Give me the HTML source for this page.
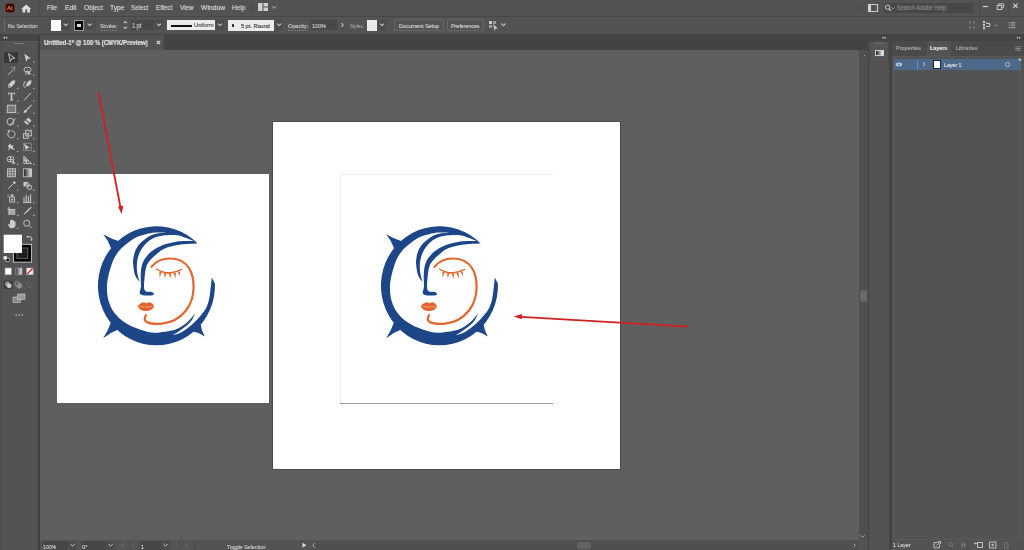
<!DOCTYPE html>
<html><head><meta charset="utf-8">
<style>
*{margin:0;padding:0;box-sizing:border-box}
html,body{width:1024px;height:550px;overflow:hidden;background:#535353;font-family:"Liberation Sans",sans-serif;color:#d4d4d4}
.a{position:absolute}
.t{position:absolute;white-space:nowrap;font-size:6.5px;line-height:8px;color:#d8d8d8;will-change:transform;-webkit-text-stroke:0.15px currentColor}
.sep{position:absolute;width:1px;background:#4a4a4a}
.chev{position:absolute;width:5px;height:3px}
</style></head><body>
<!-- menu bar -->
<div class="a" style="left:0;top:0;width:1024px;height:16px;background:#535353"></div>
<div class="a" style="left:0;top:15.5px;width:1024px;height:1px;background:#474747"></div>
<!-- Ai logo -->
<div class="a" style="left:5.5px;top:3.7px;width:8.4px;height:8px;background:#3a0806;border-radius:1.5px;box-shadow:0 0 0 0.5px #5a2018"></div>
<div class="t" style="left:7.2px;top:5.6px;font-size:5.4px;line-height:1;font-weight:700;color:#f07048">Ai</div>
<!-- home -->
<svg class="a" style="left:21px;top:3.5px" width="10.5" height="9" viewBox="0 0 10.5 9"><path d="M5.2 0.4 L10.2 4.9 L9 4.9 L9 8.6 L6.2 8.6 L6.2 5.6 L4.3 5.6 L4.3 8.6 L1.5 8.6 L1.5 4.9 L0.3 4.9 Z" fill="#dcdcdc"/></svg>
<div class="sep" style="left:38px;top:3px;height:10px"></div>
<div class="t" style="left:47.36px;top:5.11px;font-size:6.72px;line-height:1;font-weight:400;color:#d8d8d8;transform:scaleX(0.935);transform-origin:0 0">File</div>
<div class="t" style="left:64.56px;top:5.11px;font-size:6.72px;line-height:1;font-weight:400;color:#d8d8d8;transform:scaleX(0.990);transform-origin:0 0">Edit</div>
<div class="t" style="left:83.66px;top:5.11px;font-size:6.72px;line-height:1;font-weight:400;color:#d8d8d8;transform:scaleX(0.976);transform-origin:0 0">Object</div>
<div class="t" style="left:110.06px;top:5.11px;font-size:6.72px;line-height:1;font-weight:400;color:#d8d8d8;transform:scaleX(1.000);transform-origin:0 0">Type</div>
<div class="t" style="left:131.46px;top:5.11px;font-size:6.72px;line-height:1;font-weight:400;color:#d8d8d8;transform:scaleX(0.927);transform-origin:0 0">Select</div>
<div class="t" style="left:156.26px;top:5.11px;font-size:6.72px;line-height:1;font-weight:400;color:#d8d8d8;transform:scaleX(0.958);transform-origin:0 0">Effect</div>
<div class="t" style="left:180.16px;top:5.11px;font-size:6.72px;line-height:1;font-weight:400;color:#d8d8d8;transform:scaleX(0.943);transform-origin:0 0">View</div>
<div class="t" style="left:200.96px;top:5.11px;font-size:6.72px;line-height:1;font-weight:400;color:#d8d8d8;transform:scaleX(1.007);transform-origin:0 0">Window</div>
<div class="t" style="left:232.16px;top:5.11px;font-size:6.72px;line-height:1;font-weight:400;color:#d8d8d8;transform:scaleX(0.965);transform-origin:0 0">Help</div>
<div class="sep" style="left:251px;top:3px;height:10px"></div>
<svg class="a" style="left:258px;top:3px" width="10" height="8" viewBox="0 0 10 8"><rect x="0" y="0" width="4.5" height="8" fill="#d0d0d0"/><rect x="5.5" y="0" width="4.5" height="3.5" fill="#d0d0d0"/><rect x="5.5" y="4.5" width="4.5" height="3.5" fill="#d0d0d0"/></svg>

<!-- search / window controls -->
<div class="sep" style="left:861px;top:3px;height:10px"></div>
<svg class="a" style="left:868px;top:4px" width="10" height="8" viewBox="0 0 10 8"><rect x="0.5" y="0.5" width="9" height="7" fill="none" stroke="#cfcfcf" stroke-width="1"/><rect x="1" y="1" width="2" height="6" fill="#cfcfcf"/></svg>
<div class="a" style="left:884px;top:3px;width:89px;height:10px;background:#474747;border-radius:1px"></div>
<svg class="a" style="left:884px;top:3px" width="12" height="10" viewBox="0 0 12 10"><circle cx="3.6" cy="4.2" r="2.2" fill="none" stroke="#d0d0d0" stroke-width="1"/><path d="M5.2 5.8 L7 7.8" stroke="#d0d0d0" stroke-width="1.2"/><path d="M7.6 4.4 L9 5.8 L10.4 4.4" fill="none" stroke="#c0c0c0" stroke-width="0.9"/></svg>
<div class="t" style="left:896.58px;top:5.26px;font-size:6.31px;line-height:1;font-weight:400;color:#8a8a8a;transform:scaleX(0.910);transform-origin:0 0">Search Adobe Help</div>
<div class="sep" style="left:978.6px;top:0;height:15px;background:#4b4b4b"></div>
<div class="sep" style="left:993px;top:0;height:15px;background:#4b4b4b"></div>
<div class="sep" style="left:1008.2px;top:0;height:15px;background:#4b4b4b"></div>
<svg class="a" style="left:0;top:0" width="1024" height="16" viewBox="0 0 1024 16">
<path d="M272.0 6.2 L274.1 8.3 L276.2 6.2" fill="none" stroke="#c8c8c8" stroke-width="0.9"/>
<rect x="982.8" y="5.9" width="5.4" height="1.2" fill="#d0d0d0"/>
<g fill="none" stroke="#d0d0d0" stroke-width="0.9"><rect x="997.2" y="5.5" width="4.5" height="4"/><path d="M998.7 5.5 V3.8 H1003.4 V7.8 H1001.7"/></g>
<path d="M1013.3 3.6 L1017.6 7.9 M1017.6 3.6 L1013.3 7.9" stroke="#d8d8d8" stroke-width="1.1"/>
</svg>


<!-- control bar -->
<div class="a" style="left:0;top:16.5px;width:1024px;height:17.5px;background:#535353"></div>
<div class="a" style="left:0;top:34px;width:1024px;height:1px;background:#424242"></div>

<!-- control bar content -->
<div class="a" style="left:3.5px;top:19px;width:1px;height:12px;background:#6a6a6a"></div>
<div class="t" style="left:7.71px;top:24.21px;font-size:5.90px;line-height:1;font-weight:400;color:#c8c8c8;transform:scaleX(0.895);transform-origin:0 0">No Selection</div>
<div class="a" style="left:50.5px;top:20px;width:10.5px;height:10.5px;background:#fff"></div>
<div class="a" style="left:62px;top:20.3px;width:7.5px;height:9.5px;background:#4c4c4c"></div>
<div class="a" style="left:73.8px;top:20px;width:10.6px;height:10.8px;background:#000;border:1px solid #9a9a9a"></div>
<div class="a" style="left:77.3px;top:23.5px;width:3.6px;height:3.6px;background:#d8d8d8"></div>
<div class="a" style="left:86px;top:20.3px;width:7.5px;height:9.5px;background:#4c4c4c"></div>
<div class="a" style="left:95px;top:19px;width:1px;height:12px;background:#4a4a4a"></div>
<div class="t" style="left:100.30px;top:23.09px;font-size:6.04px;line-height:1;font-weight:400;color:#cccccc;transform:scaleX(0.910);transform-origin:0 0">Stroke:</div>
<div class="a" style="left:100.6px;top:30px;width:16.8px;height:0;border-top:0.6px dotted #8a8a8a"></div>
<div class="a" style="left:288px;top:30px;width:19.6px;height:0;border-top:0.6px dotted #8a8a8a"></div>
<div class="a" style="left:131.3px;top:20.3px;width:23px;height:9.7px;background:#474747"></div>
<div class="t" style="left:132.48px;top:22.66px;font-size:6.31px;line-height:1;font-weight:400;color:#cccccc;transform:scaleX(0.890);transform-origin:0 0">1 pt</div>
<div class="a" style="left:155px;top:20.3px;width:8px;height:9.7px;background:#4c4c4c"></div>
<div class="a" style="left:167.3px;top:19.8px;width:47.7px;height:10.7px;background:#ececec"></div>
<div class="a" style="left:171px;top:25px;width:21px;height:1.6px;background:#111"></div>
<div class="t" style="left:193.71px;top:23.21px;font-size:5.90px;line-height:1;font-weight:400;color:#4a4a4a;transform:scaleX(0.951);transform-origin:0 0">Uniform</div>
<div class="a" style="left:216.3px;top:20.3px;width:7.5px;height:9.7px;background:#4c4c4c"></div>
<div class="a" style="left:228px;top:20.2px;width:46.3px;height:10.4px;background:#ececec"></div>
<div class="a" style="left:231.8px;top:24px;width:2.6px;height:2.6px;border-radius:50%;background:#111"></div>
<div class="t" style="left:240.50px;top:23.09px;font-size:6.04px;line-height:1;font-weight:400;color:#333333;transform:scaleX(0.924);transform-origin:0 0">5 pt. Round</div>
<div class="a" style="left:275.5px;top:20.3px;width:7.5px;height:9.7px;background:#4c4c4c"></div>
<div class="t" style="left:287.70px;top:23.09px;font-size:6.04px;line-height:1;font-weight:400;color:#cccccc;transform:scaleX(0.913);transform-origin:0 0">Opacity:</div>
<div class="a" style="left:311.4px;top:20.3px;width:25.7px;height:9.7px;background:#474747"></div>
<div class="t" style="left:312.20px;top:23.09px;font-size:6.04px;line-height:1;font-weight:400;color:#cccccc;transform:scaleX(0.913);transform-origin:0 0">100%</div>
<div class="t" style="left:350.10px;top:23.09px;font-size:6.04px;line-height:1;font-weight:400;color:#a0a0a0;transform:scaleX(0.762);transform-origin:0 0">Styles:</div>
<div class="a" style="left:367px;top:20.2px;width:10px;height:10.4px;background:#eaeaea"></div>
<div class="a" style="left:378px;top:20.3px;width:8px;height:9.7px;background:#4c4c4c"></div>
<div class="a" style="left:394px;top:19.4px;width:50px;height:11.8px;border:1px solid #666;border-radius:1px"></div>
<div class="t" style="left:398.50px;top:23.09px;font-size:6.04px;line-height:1;font-weight:400;color:#d4d4d4;transform:scaleX(0.893);transform-origin:0 0">Document Setup</div>
<div class="a" style="left:447px;top:19.4px;width:37px;height:11.8px;border:1px solid #666;border-radius:1px"></div>
<div class="t" style="left:450.70px;top:23.09px;font-size:6.04px;line-height:1;font-weight:400;color:#d4d4d4;transform:scaleX(0.876);transform-origin:0 0">Preferences</div>
<svg class="a" style="left:0;top:16px" width="1024" height="18" viewBox="0 16 1024 18">
<g fill="none" stroke="#c8c8c8" stroke-width="1.05" stroke-linejoin="round">
<path d="M63.7 23.6 L65.8 25.7 L67.9 23.6"/>
<path d="M87.7 23.6 L89.8 25.7 L91.9 23.6"/>
<path d="M123.8 23 L125.4 21.6 L127 23 M123.8 27 L125.4 28.4 L127 27"/>
<path d="M156.9 23.6 L159.0 25.7 L161.1 23.6"/>
<path d="M217.9 23.6 L220.0 25.7 L222.1 23.6"/>
<path d="M277.1 23.6 L279.2 25.7 L281.3 23.6"/>
<path d="M341.6 23.2 L343.2 25 L341.6 26.8"/>
<path d="M379.9 23.6 L382.0 25.7 L384.1 23.6"/>
<path d="M501.2 23.6 L503.3 25.7 L505.4 23.6"/>
<path d="M994.5 24.6 L996.3 26 L998.1 24.6" stroke="#7a7a7a"/>
</g>
<g fill="#c8c8c8">
<rect x="489" y="21" width="3" height="3"/><rect x="489" y="25" width="3" height="3" fill="#9a9a9a"/><rect x="493" y="21" width="3" height="3" fill="#9a9a9a"/>
<path d="M493 24 L498 28.5 L495.6 28.6 L494.6 31 Z"/>
<g fill="#7c7c7c"><rect x="969" y="21.5" width="2" height="2"/><rect x="973" y="21.5" width="2" height="2"/><rect x="969" y="26.5" width="2" height="2"/><rect x="973" y="26.5" width="2" height="2"/></g>
<rect x="983" y="21" width="2" height="2.2"/><rect x="983" y="24" width="2" height="2.2"/><rect x="983" y="27" width="2" height="2.2"/>
<path d="M986 22.8 h2.4 a2.1 2.1 0 0 1 0 4.2 h-2.4 v-1.1 h2.4 a1 1 0 0 0 0 -2 h-2.4 Z"/>
<g fill="#a8a8a8"><rect x="1008.8" y="22.2" width="1.2" height="1.2"/><rect x="1008.8" y="24.6" width="1.2" height="1.2"/><rect x="1008.8" y="27" width="1.2" height="1.2"/>
<rect x="1010.8" y="22.2" width="4.4" height="1.1"/><rect x="1010.8" y="24.6" width="4.4" height="1.1"/><rect x="1010.8" y="27" width="4.4" height="1.1"/></g>
</g>
</svg>
<!-- tab bar + canvas -->
<div class="a" style="left:38px;top:34px;width:830px;height:16px;background:#434343"></div>
<div class="a" style="left:40px;top:35px;width:124px;height:15px;background:#535353"></div>
<div class="t" style="left:44.08px;top:39.66px;font-size:6.31px;line-height:1;font-weight:700;color:#e6e6e6;transform:scaleX(0.951);transform-origin:0 0">Untitled-1* @ 100 % (CMYK/Preview)</div>
<svg class="a" style="left:156px;top:40px" width="5" height="5" viewBox="0 0 5 5"><path d="M0.8 0.8 L4.2 4.2 M4.2 0.8 L0.8 4.2" stroke="#e0e0e0" stroke-width="1.1"/></svg>
<div class="a" style="left:40px;top:50px;width:818.5px;height:490px;background:#5f5f5f"></div>

<!-- toolbar -->
<div class="a" style="left:0;top:34px;width:38px;height:516px;background:#535353"></div>
<div class="a" style="left:0;top:34px;width:38px;height:7px;background:#444"></div>
<div class="a" style="left:38px;top:34px;width:2px;height:516px;background:#3f3f3f"></div>

<!-- toolbar content -->
<div class="a" style="left:1px;top:41px;width:37px;height:509px;border-left:1px solid #4c4c4c;border-top:1px solid #5a5a5a"></div>
<div class="a" style="left:14.2px;top:43px;width:9.8px;height:0.9px;background:#7a7a7a"></div>
<div class="a" style="left:4.1px;top:52px;width:14.3px;height:10.8px;background:#383838"></div>
<svg class="a" style="left:0;top:34px" width="38" height="290" viewBox="0 34 38 290">
<path d="M5 36.3 L3 37.7 L5 39.1 Z M7.3 36.3 L5.3 37.7 L7.3 39.1 Z" fill="#c0c0c0"/>
<g transform="translate(11.5 57.5)"><path fill="none" stroke="#cdcdcd" stroke-width="0.9" d="M-2.8 -3.8 L3.3 0.8 L0.2 1.2 L-1.2 4 Z"/></g>
<g transform="translate(27.5 57.5)"><path fill="#cdcdcd" d="M-3.2 -3.8 L3.5 1 L0.3 1.3 L-1.3 4.2 Z"/></g>
<g transform="translate(11.5 70.8)"><path fill="none" stroke="#cdcdcd" stroke-width="0.9" stroke-width="1.2" d="M-3.5 4 L2 -1.5"/><path fill="none" stroke="#cdcdcd" stroke-width="0.9" stroke-width="0.7" d="M2.5 -4 V-2.5 M3.8 -2.7 L2.6 -2 M-0.5 -3.5 L0.6 -2.6 M3.5 0.5 L2.6 -0.3"/></g>
<g transform="translate(27.5 70.8)"><ellipse cx="0" cy="-1.2" rx="3.6" ry="2.4" fill="none" stroke="#cdcdcd" stroke-width="0.9"/><path fill="#cdcdcd" d="M-0.5 -1 L3.8 3.5 L1.2 3.4 L0.5 4.5 Z"/><path fill="none" stroke="#cdcdcd" stroke-width="0.9" d="M-1.5 1 Q-2.5 3 -1 4"/></g>
<g transform="translate(11.5 84)"><path fill="#cdcdcd" d="M3.8 -3.8 L0.5 -3.2 L-3 0.5 L-3.4 3.8 L-0.2 3.2 L3.2 -0.5 Z"/><path fill="#535353" d="M-1.8 1.5 L-0.8 2.2 L-2.8 3.3 Z"/></g>
<g transform="translate(27.5 84)"><path fill="#cdcdcd" d="M4 -3.8 L1.4 -3.2 L-1 -0.6 L-1.4 2.4 L1.4 1.9 L3.6 -0.8 Z"/><path fill="none" stroke="#cdcdcd" stroke-width="0.9" d="M-1.4 2.4 Q-3.6 4.4 -3.8 1.5 Q-4 -1 -2 -3"/></g>
<g transform="translate(11.5 96.6)"><path fill="#cdcdcd" d="M-3.5 -3.8 H3.5 V-1.8 H2.8 L2.5 -3 H0.8 V3 L1.8 3.3 V4 H-1.8 V3.3 L-0.8 3 V-3 H-2.5 L-2.8 -1.8 H-3.5 Z"/></g>
<g transform="translate(27.5 96.6)"><path fill="none" stroke="#cdcdcd" stroke-width="0.9" stroke-width="1.1" d="M-3.5 3.8 L3.5 -3.8"/></g>
<g transform="translate(11.5 108.8)"><rect x="-4.2" y="-3.6" width="8.4" height="7.4" fill="#7a7a7a" stroke="#c8c8c8" stroke-width="0.9"/></g>
<g transform="translate(27.5 108.8)"><path fill="#cdcdcd" d="M4 -4.2 L4.5 -3.7 L0 1.3 L-1 0.3 Z"/><path fill="#cdcdcd" d="M-1.4 0.8 L-0.2 2 Q-0.8 4.2 -4 4.2 Q-3.6 1.2 -1.4 0.8 Z"/></g>
<g transform="translate(11.5 121.6)"><circle cx="-1" cy="0" r="3.4" fill="none" stroke="#cdcdcd" stroke-width="0.9"/><path fill="none" stroke="#cdcdcd" stroke-width="0.9" stroke-width="1.1" d="M-1.5 4 L4 -3"/></g>
<g transform="translate(27.5 121.6)"><path fill="#cdcdcd" d="M0.8 -4 L4 -0.8 L-0.2 3.4 L-3.4 0.2 Z"/><path fill="#535353" d="M-1.2 -1.9 L1.9 1.2 L1.2 1.9 L-1.9 -1.2 Z"/></g>
<g transform="translate(11.5 134.3)"><path fill="none" stroke="#cdcdcd" stroke-width="0.9" d="M-2.8 -2.4 A3.6 3.6 0 1 0 0 -3.6"/><path fill="#cdcdcd" d="M-4 -4 L-1 -4 L-2.5 -1.5 Z"/></g>
<g transform="translate(27.5 134.3)"><rect x="-4" y="-0.6" width="4.6" height="4.6" fill="none" stroke="#cdcdcd" stroke-width="0.9"/><rect x="-1.8" y="-4" width="5.6" height="5.6" fill="none" stroke="#cdcdcd" stroke-width="0.9"/><path fill="none" stroke="#cdcdcd" stroke-width="0.9" d="M-0.6 0.4 L2.8 -3"/></g>
<g transform="translate(11.5 147)"><path fill="#cdcdcd" d="M-3.5 3.8 L-2.5 0.5 L-3.6 -1 L-1.5 -3.5 L0 -1.2 L2 -2 L1.2 0.8 L3.8 2.5 L0.5 2.5 L-1 1 Z"/></g>
<g transform="translate(27.5 147)"><rect x="-3.8" y="-3.6" width="7.6" height="7.2" fill="none" stroke="#bdbdbd" stroke-width="0.8" stroke-dasharray="1.2 0.8"/><path fill="#cdcdcd" d="M-3.6 -3.4 L2.6 1 L-0.3 1.2 L-1.5 3.6 Z"/></g>
<g transform="translate(11.5 160)"><ellipse cx="-1" cy="-0.8" rx="3.5" ry="2.8" fill="none" stroke="#cdcdcd" stroke-width="0.9"/><path fill="none" stroke="#cdcdcd" stroke-width="0.9" stroke-width="0.6" d="M-3 -0.5 H1.5 M-1 -3.4 V2"/><path fill="#cdcdcd" d="M0.8 0.2 L4.2 3.6 L2.2 3.6 L1.2 4.6 Z"/></g>
<g transform="translate(27.5 160)"><path fill="none" stroke="#cdcdcd" stroke-width="0.9" d="M-3.6 -4 V3.6 H4 Z M-3.6 0 L1.5 1.2 M-3.6 -1.8 L-0.5 3.6 M-1.5 -2.2 L-0.6 3.6"/></g>
<g transform="translate(11.5 172.8)"><rect x="-4" y="-4" width="8" height="8" fill="#6a6a6a" stroke="#c8c8c8" stroke-width="0.9"/><path fill="none" stroke="#d8d8d8" stroke-width="0.6" d="M-4 -1.2 Q0 -2.4 4 -1 M-4 1.4 Q0 0.4 4 1.6 M-1.3 -4 Q-2.4 0 -1 4 M1.4 -4 Q0.4 0 1.6 4"/></g>
<g transform="translate(27.5 172.8)"><defs><linearGradient id="tg"><stop offset="0" stop-color="#1a1a1a"/><stop offset="1" stop-color="#e8e8e8"/></linearGradient></defs><rect x="-4" y="-4" width="8" height="8" fill="url(#tg)" stroke="#c8c8c8" stroke-width="0.8"/></g>
<g transform="translate(11.5 185.5)"><path fill="none" stroke="#cdcdcd" stroke-width="0.9" stroke-width="1.6" d="M-3.2 3.2 L2.2 -2.2"/><path fill="#cdcdcd" d="M1.2 -3.2 L2.8 -4.4 L4.4 -2.8 L3.2 -1.2 Z"/></g>
<g transform="translate(27.5 185.5)"><rect x="-4" y="-3.6" width="4.5" height="4.5" fill="#cdcdcd"/><rect x="-1.6" y="-2.2" width="4" height="4" fill="#909090"/><circle cx="2" cy="1.8" r="2.3" fill="none" stroke="#cdcdcd" stroke-width="0.9"/></g>
<g transform="translate(11.5 198.3)"><rect x="-1.8" y="-1.2" width="4.8" height="5" fill="none" stroke="#cdcdcd" stroke-width="0.9"/><rect x="-0.8" y="-3.8" width="2.8" height="2" fill="#cdcdcd"/><circle cx="0.6" cy="1.4" r="1" fill="#cdcdcd"/><path fill="none" stroke="#cdcdcd" stroke-width="0.9" stroke-width="0.6" d="M-4 -3.5 H-2.8 M-4 -2 H-2.8"/></g>
<g transform="translate(27.5 198.3)"><path fill="#cdcdcd" d="M-4 -1 H-3 V4 H-4 Z M-1.8 -3.5 H-0.8 V4 H-1.8 Z M0.4 -2 H1.4 V4 H0.4 Z M2.6 -4 H3.6 V4 H2.6 Z"/><path fill="none" stroke="#cdcdcd" stroke-width="0.9" stroke-width="0.6" d="M-4.4 4.2 H4"/></g>
<g transform="translate(11.5 211)"><rect x="-2.6" y="-1.6" width="6.4" height="5.6" fill="#cdcdcd" fill-opacity="0.7"/><path fill="none" stroke="#cdcdcd" stroke-width="0.9" stroke-width="0.7" d="M-4.2 -1.6 H3.8 M-2.6 -4.2 V4"/></g>
<g transform="translate(27.5 211)"><path fill="#cdcdcd" d="M4 -4 L1.5 -1 L-2.5 3 L-3.8 3.8 L-3.2 2.2 L1.5 -2.5 Z"/><path fill="none" stroke="#cdcdcd" stroke-width="0.9" d="M4 -4 L-0.6 0.8"/></g>
<g transform="translate(11.5 224)"><path fill="#cdcdcd" d="M-3.6 0.2 L-2.9 -0.3 L-1.5 1 V-3.4 L-0.7 -3.8 L-0.2 -3.4 V-0.6 V-4.2 L0.6 -4.4 L1.2 -4 V-0.6 V-3.4 L2 -3.8 L2.6 -3.4 V-0.4 V-2.4 L3.4 -2.6 L4 -2.2 V1.8 Q3.6 4.2 1 4.2 H-0.6 Q-1.8 4 -2.6 2.4 Z"/></g>
<g transform="translate(27.5 224)"><circle cx="-0.8" cy="-0.8" r="3" fill="none" stroke="#cdcdcd" stroke-width="0.9"/><path fill="none" stroke="#cdcdcd" stroke-width="0.9" stroke-width="1.2" d="M1.4 1.4 L4 4"/></g>
<path d="M34.4 60.7 V62.5 H32.6 Z" fill="#bdbdbd"/>
<path d="M34.4 74.0 V75.8 H32.6 Z" fill="#bdbdbd"/>
<path d="M18.4 87.2 V89 H16.6 Z" fill="#bdbdbd"/>
<path d="M34.4 87.2 V89 H32.6 Z" fill="#bdbdbd"/>
<path d="M18.4 99.8 V101.6 H16.6 Z" fill="#bdbdbd"/>
<path d="M34.4 99.8 V101.6 H32.6 Z" fill="#bdbdbd"/>
<path d="M18.4 112.0 V113.8 H16.6 Z" fill="#bdbdbd"/>
<path d="M34.4 112.0 V113.8 H32.6 Z" fill="#bdbdbd"/>
<path d="M18.4 124.8 V126.6 H16.6 Z" fill="#bdbdbd"/>
<path d="M34.4 124.8 V126.6 H32.6 Z" fill="#bdbdbd"/>
<path d="M18.4 137.5 V139.3 H16.6 Z" fill="#bdbdbd"/>
<path d="M34.4 137.5 V139.3 H32.6 Z" fill="#bdbdbd"/>
<path d="M18.4 150.2 V152 H16.6 Z" fill="#bdbdbd"/>
<path d="M34.4 150.2 V152 H32.6 Z" fill="#bdbdbd"/>
<path d="M18.4 163.2 V165 H16.6 Z" fill="#bdbdbd"/>
<path d="M34.4 163.2 V165 H32.6 Z" fill="#bdbdbd"/>
<path d="M18.4 188.7 V190.5 H16.6 Z" fill="#bdbdbd"/>
<path d="M34.4 188.7 V190.5 H32.6 Z" fill="#bdbdbd"/>
<path d="M18.4 201.5 V203.3 H16.6 Z" fill="#bdbdbd"/>
<path d="M34.4 201.5 V203.3 H32.6 Z" fill="#bdbdbd"/>
<path d="M18.4 214.2 V216 H16.6 Z" fill="#bdbdbd"/>
<path d="M34.4 214.2 V216 H32.6 Z" fill="#bdbdbd"/>
<path d="M18.4 227.2 V229 H16.6 Z" fill="#bdbdbd"/>
<rect x="13.4" y="244.3" width="18.2" height="17.8" fill="#000" stroke="#cfcfcf" stroke-width="0.9"/>
<rect x="17" y="248" width="10.8" height="10.4" fill="#1e1e1e" stroke="#6a6a6a" stroke-width="0.9"/>
<rect x="3.7" y="234.7" width="18.3" height="18.3" fill="#fff"/>
<path d="M27.5 236.8 H30.2 Q31.6 236.8 31.6 238.2 V240" fill="none" stroke="#cdcdcd" stroke-width="0.9"/>
<path d="M26.4 236.8 L28 235.4 V238.2 Z M30.2 239.6 H33 L31.6 241 Z" fill="#cdcdcd"/>
<rect x="6" y="258.2" width="3.2" height="3.2" fill="#000" stroke="#cfcfcf" stroke-width="0.7"/>
<rect x="3.6" y="256.2" width="3.2" height="3.2" fill="#fff"/>
<rect x="5" y="268" width="6.4" height="6.8" fill="#fff" stroke="#999" stroke-width="0.6"/>
<defs><linearGradient id="tg2"><stop offset="0" stop-color="#333"/><stop offset="1" stop-color="#eee"/></linearGradient></defs>
<rect x="15.4" y="268" width="6.6" height="6.8" fill="url(#tg2)" stroke="#999" stroke-width="0.6"/>
<rect x="26.4" y="268" width="6.7" height="6.8" fill="#fff" stroke="#999" stroke-width="0.6"/>
<path d="M26.9 274.3 L32.6 268.5" stroke="#e0201f" stroke-width="1.4"/>
<rect x="4" y="280.6" width="8.6" height="8.4" fill="#3c3c3c"/>
<circle cx="7.4" cy="284" r="2.4" fill="#9a9a9a"/><circle cx="9.2" cy="285.8" r="2.4" fill="#cfcfcf"/>
<circle cx="17.4" cy="284" r="2.4" fill="none" stroke="#a0a0a0" stroke-width="0.8"/><circle cx="19.4" cy="285.8" r="2.4" fill="#8a8a8a" stroke="#a0a0a0" stroke-width="0.6"/>
<circle cx="29.6" cy="284.8" r="2.6" fill="none" stroke="#6c6c6c" stroke-width="0.8"/>
<rect x="13" y="297" width="7.5" height="5.4" fill="#8a8a8a" stroke="#cfcfcf" stroke-width="0.6"/>
<rect x="17.5" y="294" width="7.5" height="5.4" fill="#9a9a9a" stroke="#cfcfcf" stroke-width="0.6"/>
<circle cx="16.2" cy="315" r="0.8" fill="#c8c8c8"/><circle cx="19.2" cy="315" r="0.8" fill="#c8c8c8"/><circle cx="22.2" cy="315" r="0.8" fill="#c8c8c8"/>
</svg>
<!-- v scrollbar -->
<div class="a" style="left:858.5px;top:50px;width:10px;height:490px;background:#505050"></div>
<div class="a" style="left:860px;top:289.5px;width:7.3px;height:12.5px;background:#676767;border-radius:3px"></div>
<!-- status bar -->
<div class="a" style="left:40px;top:540px;width:828px;height:10px;background:#535353"></div>
<div class="a" style="left:42.6px;top:541px;width:25.8px;height:9px;background:#474747"></div>
<div class="a" style="left:68.4px;top:541px;width:8.7px;height:9px;background:#4c4c4c"></div>
<div class="a" style="left:81px;top:541px;width:25.4px;height:9px;background:#474747"></div>
<div class="a" style="left:106.4px;top:541px;width:8.6px;height:9px;background:#4c4c4c"></div>
<div class="a" style="left:139.6px;top:541px;width:21.4px;height:9px;background:#474747"></div>
<div class="a" style="left:161px;top:541px;width:9px;height:9px;background:#4c4c4c"></div>
<div class="a" style="left:194px;top:541px;width:1px;height:9px;background:#4a4a4a"></div>
<div class="t" style="left:43.13px;top:544.66px;font-size:5.49px;line-height:1;font-weight:400;color:#d0d0d0;transform:scaleX(0.929);transform-origin:0 0">100%</div>
<div class="t" style="left:81.73px;top:544.66px;font-size:5.49px;line-height:1;font-weight:400;color:#d0d0d0;transform:scaleX(1.067);transform-origin:0 0">0&deg;</div>
<div class="t" style="left:140.93px;top:544.66px;font-size:5.49px;line-height:1;font-weight:400;color:#d0d0d0;transform:scaleX(1.001);transform-origin:0 0">1</div>
<div class="t" style="left:226.73px;top:544.66px;font-size:5.49px;line-height:1;font-weight:400;color:#c8c8c8;transform:scaleX(0.960);transform-origin:0 0">Toggle Selection</div>
<div class="a" style="left:316px;top:541px;width:542px;height:9px;background:#4f4f4f"></div>
<div class="a" style="left:577px;top:542px;width:14px;height:7px;background:#636363;border-radius:3px"></div>
<svg class="a" style="left:0;top:530px" width="1024" height="20" viewBox="0 530 1024 20">
<g fill="none" stroke="#c8c8c8" stroke-width="0.9">
<path d="M70.6 544.0 L72.7 546.1 L74.8 544.0"/>
<path d="M108.6 544.0 L110.7 546.1 L112.8 544.0"/>
<path d="M163.4 544.0 L165.5 546.1 L167.6 544.0"/>
<g stroke="#6a6a6a"><path d="M122 543 V547.5 M125.5 543 L123.3 545.2 L125.5 547.5"/><path d="M134.5 543 L132.3 545.2 L134.5 547.5"/><path d="M176 543 L178.2 545.2 L176 547.5"/><path d="M184 543 L186.2 545.2 L184 547.5 M187.3 543 V547.5"/></g>
<path d="M314.8 543 L312.8 545.2 L314.8 547.5" stroke="#b0b0b0"/>
<path d="M853.5 543.5 L855.3 545.2 L853.5 547" stroke="#b0b0b0"/>
<path d="M860.5 535.3 L862.6 537.4 L864.7 535.3" stroke="#b0b0b0"/>
</g>
<path d="M302.5 542.8 L306.3 545.2 L302.5 547.6 Z" fill="#e0e0e0"/>
</svg>

<!-- right strips -->
<div class="a" style="left:868px;top:34px;width:1.5px;height:516px;background:#444"></div>
<div class="a" style="left:869.3px;top:34px;width:20px;height:516px;background:#535353"></div>
<div class="a" style="left:868px;top:34px;width:156px;height:6.5px;background:#434343"></div>
<div class="a" style="left:870px;top:40.7px;width:19px;height:21px;border:1px solid #4b4b4b;background:#555"></div>
<div class="a" style="left:875px;top:43.2px;width:9px;height:0.8px;background:#6e6e6e"></div>
<div class="a" style="left:875px;top:49.9px;width:9.2px;height:6.6px;border:0.8px solid #cfcfcf;background:linear-gradient(90deg,#222,#fff)"></div>
<div class="a" style="left:889.3px;top:34px;width:2.7px;height:516px;background:#444"></div>
<div class="a" style="left:892px;top:40.5px;width:132px;height:509.5px;background:#535353"></div>
<div class="a" style="left:892px;top:40.5px;width:34.8px;height:15.3px;background:#4a4a4a"></div>
<div class="a" style="left:951px;top:40.5px;width:73px;height:15.3px;background:#4a4a4a"></div>
<div class="t" style="left:895.53px;top:46.16px;font-size:5.49px;line-height:1;font-weight:400;color:#a8a8a8;transform:scaleX(1.005);transform-origin:0 0">Properties</div>
<div class="t" style="left:929.53px;top:46.16px;font-size:5.49px;line-height:1;font-weight:700;color:#e8e8e8;transform:scaleX(0.97);transform-origin:0 0">Layers</div>
<div class="t" style="left:955.93px;top:46.16px;font-size:5.49px;line-height:1;font-weight:400;color:#a8a8a8;transform:scaleX(1.023);transform-origin:0 0">Libraries</div>
<div class="a" style="left:892.9px;top:56px;width:128px;height:483.5px;border:1px solid #595959"></div>
<div class="a" style="left:893.5px;top:58.6px;width:127.3px;height:11.4px;background:#4d6889"></div>
<div class="a" style="left:916.8px;top:59.5px;width:1.3px;height:10px;background:#5b8be0"></div>
<div class="a" style="left:932.5px;top:60px;width:8.7px;height:9.1px;background:#fff;border:0.7px solid #222"></div>
<div class="t" style="left:944.13px;top:63.36px;font-size:5.49px;line-height:1;font-weight:400;color:#e6e6e6;transform:scaleX(0.960);transform-origin:0 0">Layer 1</div>
<div class="t" style="left:893.32px;top:542.84px;font-size:5.62px;line-height:1;font-weight:400;color:#d0d0d0;transform:scaleX(0.942);transform-origin:0 0">1 Layer</div>
<svg class="a" style="left:864px;top:34px" width="160" height="40" viewBox="864 34 160 40">
<g fill="#c8c8c8"><path d="M883.6 36.4 L881.9 37.7 L883.6 39 Z M885.8 36.4 L884.1 37.7 L885.8 39 Z"/><path d="M1016.9 36.4 L1018.6 37.7 L1016.9 39 Z M1019.1 36.4 L1020.8 37.7 L1019.1 39 Z"/></g>
<path d="M860.6 56 L862.8 54 L865 56" fill="none" stroke="#b8b8b8" stroke-width="0.9"/>
<g fill="#8e8e8e"><rect x="1015.2" y="46.4" width="5.6" height="0.9"/><rect x="1015.2" y="48.1" width="5.6" height="0.9"/><rect x="1015.2" y="49.8" width="5.6" height="0.9"/></g>
<ellipse cx="898.9" cy="64.4" rx="3.2" ry="1.9" fill="#b8c8d8"/><circle cx="898.9" cy="64.4" r="0.9" fill="#4d6889"/>
<path d="M923.2 62.2 L924.8 64.2 L923.2 66.2" fill="none" stroke="#e0e0e0" stroke-width="0.9"/>
<circle cx="1007.5" cy="64.5" r="2.1" fill="none" stroke="#c8d0d8" stroke-width="0.8"/>
<path d="M1017.8 58.8 L1020.8 58.8 L1020.8 61.6 Z" fill="#d8d8d8"/>
</svg>
<svg class="a" style="left:924px;top:538px" width="100" height="12" viewBox="924 538 100 12">
<g fill="none" stroke-width="0.9">
<path d="M938 542.5 H934 V547.8 H939.5 V544.5 M936.5 545.6 L940.5 541.6 M938 541.6 H940.5 V544" stroke="#c8c8c8"/>
<g stroke="#7a7a7a"><circle cx="950.6" cy="544.2" r="1.9"/><path d="M952 545.7 L953.8 547.5"/><path d="M962 542 V548 M964.5 542 V548 M961 545 H966"/><path d="M1004 542.8 H1008.5 M1004.6 543.5 V548 H1008 V543.5"/></g>
<g stroke="#c8c8c8"><rect x="977.5" y="542.5" width="5" height="5"/><path d="M974.4 543.5 H977 M975.2 542.6 L974.4 543.5 L975.2 544.4"/><rect x="989.6" y="542" width="6.3" height="6"/><path d="M992.7 543.6 V546.4 M991.3 545 H994.1"/></g>
</g>
</svg>
<!-- artboards -->
<div class="a" style="left:57px;top:174px;width:212px;height:229px;background:#fff"></div>
<div class="a" style="left:272px;top:121px;width:349px;height:349px;background:#fff;border:1px solid #4a4a4a"></div>

<!-- overlay: inner image frame, logos, arrows -->
<svg class="a" style="left:0;top:0" width="1024" height="550" viewBox="0 0 1024 550">
<line x1="340.5" y1="174.5" x2="553" y2="174.5" stroke="#eeeeee" stroke-width="1"/>
<line x1="340.5" y1="174.5" x2="340.5" y2="403" stroke="#eeeeee" stroke-width="1"/>
<line x1="340" y1="403.5" x2="553" y2="403.5" stroke="#9a9a9a" stroke-width="1"/>
<defs><g id="logo">
<path fill="#1d4688" d="M211.8 277.5 L214.9 283.5 A58.5 59.5 0 1 1 197.6 243.5 C195.67 243.60 189.77 243.75 186.00 244.10 C182.23 244.45 178.80 244.75 175.00 245.60 C171.20 246.45 166.20 247.83 163.20 249.20 C160.20 250.57 158.83 252.33 157.00 253.80 C155.17 255.27 153.70 256.47 152.20 258.00 C150.70 259.53 149.07 261.25 148.00 263.00 C146.93 264.75 146.37 266.12 145.80 268.50 C145.23 270.88 144.90 274.35 144.60 277.30 C144.30 280.25 143.95 284.00 144.00 286.20 C144.05 288.40 144.23 289.57 144.90 290.50 C145.57 291.43 146.90 291.57 148.00 291.80 C149.10 292.03 150.53 291.67 151.50 291.90 C152.47 292.13 153.52 292.70 153.80 293.20 C154.08 293.70 153.75 294.53 153.20 294.90 C152.65 295.27 151.62 295.28 150.50 295.40 C149.38 295.52 147.92 295.65 146.50 295.60 C145.08 295.55 143.13 295.53 142.00 295.10 C140.87 294.67 139.95 293.98 139.70 293.00 C139.45 292.02 140.28 290.45 140.50 289.20 C140.72 287.95 140.97 287.48 141.00 285.50 C141.03 283.52 140.65 280.18 140.70 277.30 C140.75 274.42 140.82 270.92 141.30 268.20 C141.78 265.48 142.65 263.03 143.60 261.00 C144.55 258.97 145.47 257.73 147.00 256.00 C148.53 254.27 150.13 252.42 152.80 250.60 C155.47 248.78 159.30 246.53 163.00 245.10 C166.70 243.67 171.67 242.68 175.00 242.00 C178.33 241.32 179.90 241.17 183.00 241.00 C186.10 240.83 191.83 241.00 193.60 241.00 C191.78 240.30 185.80 237.78 182.70 236.80 C179.60 235.82 178.25 235.32 175.00 235.10 C171.75 234.88 166.77 235.02 163.20 235.50 C159.63 235.98 156.25 236.87 153.60 238.00 C150.95 239.13 149.30 240.47 147.30 242.30 C145.30 244.13 143.12 246.63 141.60 249.00 C140.08 251.37 138.98 254.00 138.20 256.50 C137.42 259.00 137.07 261.33 136.90 264.00 C136.73 266.67 136.77 269.50 137.20 272.50 C137.63 275.50 139.12 280.42 139.50 282.00 C138.75 280.83 136.07 278.00 135.00 275.00 C133.93 272.00 133.33 267.00 133.10 264.00 C132.87 261.00 133.25 259.17 133.60 257.00 C133.95 254.83 134.38 252.97 135.20 251.00 C136.02 249.03 136.93 247.13 138.50 245.20 C140.07 243.27 142.05 241.22 144.60 239.40 C147.15 237.58 150.07 235.45 153.80 234.30 C157.53 233.15 164.80 232.80 167.00 232.50 C165.00 232.52 158.50 232.32 155.00 232.60 C151.50 232.88 148.83 233.55 146.00 234.20 C143.17 234.85 140.50 235.45 138.00 236.50 C135.50 237.55 133.25 239.00 131.00 240.50 C128.75 242.00 126.58 243.67 124.50 245.50 C122.42 247.33 120.28 249.25 118.50 251.50 C116.72 253.75 115.02 256.58 113.80 259.00 C112.58 261.42 112.07 263.33 111.20 266.00 C110.33 268.67 109.30 271.83 108.60 275.00 C107.90 278.17 107.20 281.67 107.00 285.00 C106.80 288.33 107.02 292.00 107.40 295.00 C107.78 298.00 108.40 300.42 109.30 303.00 C110.20 305.58 111.18 308.00 112.80 310.50 C114.42 313.00 116.72 315.83 119.00 318.00 C121.28 320.17 123.92 321.90 126.50 323.50 C129.08 325.10 130.73 326.13 134.50 327.60 C138.27 329.07 144.85 331.50 149.10 332.30 C153.35 333.10 156.60 332.60 160.00 332.40 C163.40 332.20 166.32 331.85 169.50 331.10 C172.68 330.35 175.92 329.60 179.10 327.90 C182.28 326.20 185.90 323.33 188.60 320.90 C191.30 318.47 194.18 314.57 195.30 313.30 C194.68 314.52 192.98 318.60 191.60 320.60 C190.22 322.60 189.08 323.53 187.00 325.30 C184.92 327.07 181.52 329.55 179.10 331.20 C176.68 332.85 173.60 334.53 172.50 335.20 C173.92 334.77 178.20 334.00 181.00 332.60 C183.80 331.20 186.97 328.60 189.30 326.80 C191.63 325.00 193.28 323.47 195.00 321.80 C196.72 320.13 197.88 318.85 199.60 316.80 C201.32 314.75 203.78 312.13 205.30 309.50 C206.82 306.87 207.85 304.18 208.70 301.00 C209.55 297.82 209.88 294.32 210.40 290.40 C210.92 286.48 211.57 279.65 211.80 277.50 Z"/>
<path fill="#1d4688" d="M103.2 234.2 Q110.6 238.6 117.6 240.8 L121.5 246 L114 252 L110.9 247.9 Q108.6 240.8 103.2 234.2 Z"/>
<path fill="#1d4688" d="M103.2 338.2 Q108.4 330.3 110.9 322.5 L114.5 320.5 L119.8 326.5 L117.7 329.8 Q110.5 332.4 103.2 338.2 Z"/>
<path fill="#1d4688" d="M204.8 336.6 Q199 332.6 193.4 331.5 L192 329.5 L199 322.5 L200.6 324.4 Q201.3 330.3 204.8 336.6 Z"/>

<g fill="none" stroke="#e3652c" stroke-linecap="round">
<path stroke-width="2.2" d="M151.5 266.8 C156 261 163 258.4 170.4 258.5 C178 258.6 185 262 189 268 C192.5 273.5 193.7 280 193.6 288 C193.4 296 191 304 186 310.5 C180 318 171 322.8 162 323.6 C156 324.2 150.5 324 146.8 322 C144.3 320.5 144.3 318 145.9 315.2"/>
<path stroke-width="1.2" d="M156.4 269 Q168.5 276.5 181.8 269.3"/><path fill="#e3652c" stroke="none" d="M157 269.2 Q168.5 277.8 181.2 269.6 Q168.5 275.2 157 269.2 Z"/>
<path fill="#e3652c" stroke="none" d="M159.4 272 L161.8 272 L159.6 277.8 Z M164.0 273.2 L166.4 273.2 L164.8 278.6 Z M168.8 273.6 L171.2 273.6 L170.3 278.8 Z M173.4 273 L175.8 273 L175.6 278.4 Z M177.4 271.6 L179.8 271.6 L180.2 276.4 Z"/>
</g>
<path fill="#e3652c" d="M137.7 306.4 C139.5 304 141.5 302.5 143.5 302.3 C145 302.2 146 303.2 146.4 303.4 C147 303.1 148.3 302.1 150 302.4 C152 302.8 153.5 304.5 154.1 306.4 C153 309 150 310.9 146 310.9 C141.5 310.9 139 309 137.7 306.4 Z"/>
<path fill="none" stroke="#f7c9b0" stroke-width="0.6" d="M139.5 306.6 Q146 307.4 152.5 306.6"/>
</g></defs>
<use href="#logo"/>
<use href="#logo" transform="translate(283,0)"/>
<g stroke="#d22020" fill="#d82020">
<line x1="98.5" y1="92.5" x2="120.6" y2="208" stroke-width="1.8"/>
<path d="M121.6 214 L118 206.5 L123.4 205.7 Z" stroke="none"/>
<line x1="687.7" y1="326.7" x2="521" y2="316.9" stroke-width="1.8"/>
<path d="M513.7 316.4 L522 313.9 L521.7 319.3 Z" stroke="none"/>
</g>
</svg>
</body></html>
